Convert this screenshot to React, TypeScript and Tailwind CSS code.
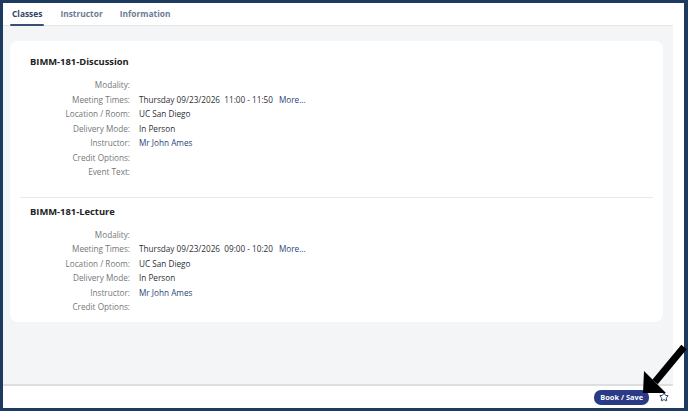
import { Star } from "lucide-react";

type Row = { label: string; value?: string; link?: boolean; more?: boolean };

const sections: { title: string; rows: Row[]; first?: boolean }[] = [
  {
    title: "BIMM-181-Discussion",
    first: true,
    rows: [
      { label: "Modality:" },
      { label: "Meeting Times:", value: "Thursday 09/23/2026\u00a0\u00a011:00 - 11:50", more: true },
      { label: "Location / Room:", value: "UC San Diego" },
      { label: "Delivery Mode:", value: "In Person" },
      { label: "Instructor:", value: "Mr John Ames", link: true },
      { label: "Credit Options:" },
      { label: "Event Text:" },
    ],
  },
  {
    title: "BIMM-181-Lecture",
    rows: [
      { label: "Modality:" },
      { label: "Meeting Times:", value: "Thursday 09/23/2026\u00a0\u00a009:00 - 10:20", more: true },
      { label: "Location / Room:", value: "UC San Diego" },
      { label: "Delivery Mode:", value: "In Person" },
      { label: "Instructor:", value: "Mr John Ames", link: true },
      { label: "Credit Options:" },
    ],
  },
];

function Tabs() {
  return (
    <div className="flex h-[23px] items-stretch gap-[17px] border-b border-[#e2e4e6] px-[8px] text-[8.4px] font-bold">
      <div className="relative flex items-center px-[1px] text-[#2f4566]">
        Classes
        <span className="absolute bottom-[-1px] left-[-1px] right-[-1px] h-[2px] rounded-sm bg-[#354f78]" />
      </div>
      <div className="flex items-center text-[#6c7c93]">Instructor</div>
      <div className="flex items-center text-[#6c7c93]">Information</div>
    </div>
  );
}

function Section({ title, rows, first }: { title: string; rows: Row[]; first?: boolean }) {
  return (
    <div className={first ? "px-[20px] pb-[17px] pt-[14px]" : "px-[20px] pb-[7px] pt-[7px]"}>
      <h3 className="mb-[9px] text-[9.4px] font-bold leading-[14px] text-[#222]">{title}</h3>
      <div className="grid grid-cols-[100px_1fr] gap-x-[9px] text-[8.2px] leading-[14.5px]">
        {rows.map((r) => (
          <div key={r.label} className="contents">
            <div className="text-right text-[#74777a]">{r.label}</div>
            <div className={r.link ? "text-[#2b4677]" : "text-[#2c3034]"}>
              {r.value ?? "\u00a0"}
              {r.more && <span className="ml-[6px] text-[#2b4677]">More...</span>}
            </div>
          </div>
        ))}
      </div>
    </div>
  );
}

export default function App() {
  return (
    <div
      className="relative flex h-[411px] w-[688px] flex-col border-[3px] border-r-4 border-[#1d3a61] bg-white"
      style={{ fontFamily: "'Open Sans', 'Noto Sans', Arial, sans-serif" }}
    >
      <div className="flex flex-1 flex-col pr-[11px]">
        <Tabs />
        <div className="flex-1 border-b-2 border-[#dcdee0] bg-[#f4f5f6] pl-[7px] pr-[10px] pt-[15px]">
          <div className="rounded-[8px] bg-white">
            <Section {...sections[0]} />
            <div className="mx-[10px] h-px bg-[#e8e9ea]" />
            <Section {...sections[1]} />
          </div>
        </div>
        <div className="flex h-[22px] items-center justify-end gap-[10px] pr-[4px]">
          <button className="h-[15px] rounded-[7px] bg-[#293a86] px-[6px] text-[7.4px] font-bold leading-[15px] text-white">
            Book / Save
          </button>
          <Star size={10} strokeWidth={2.4} className="text-[#1f3b6e]" />
        </div>
      </div>

      {/* pointer arrow over the footer */}
      <svg
        className="absolute left-[633px] top-[335px]"
        width="52"
        height="60"
        viewBox="633 335 52 60"
      >
        <line x1="652" y1="379" x2="681" y2="344" stroke="#000" strokeWidth="7" />
        <polygon points="640,390 641,368 663,390" fill="#000" />
      </svg>
    </div>
  );
}
